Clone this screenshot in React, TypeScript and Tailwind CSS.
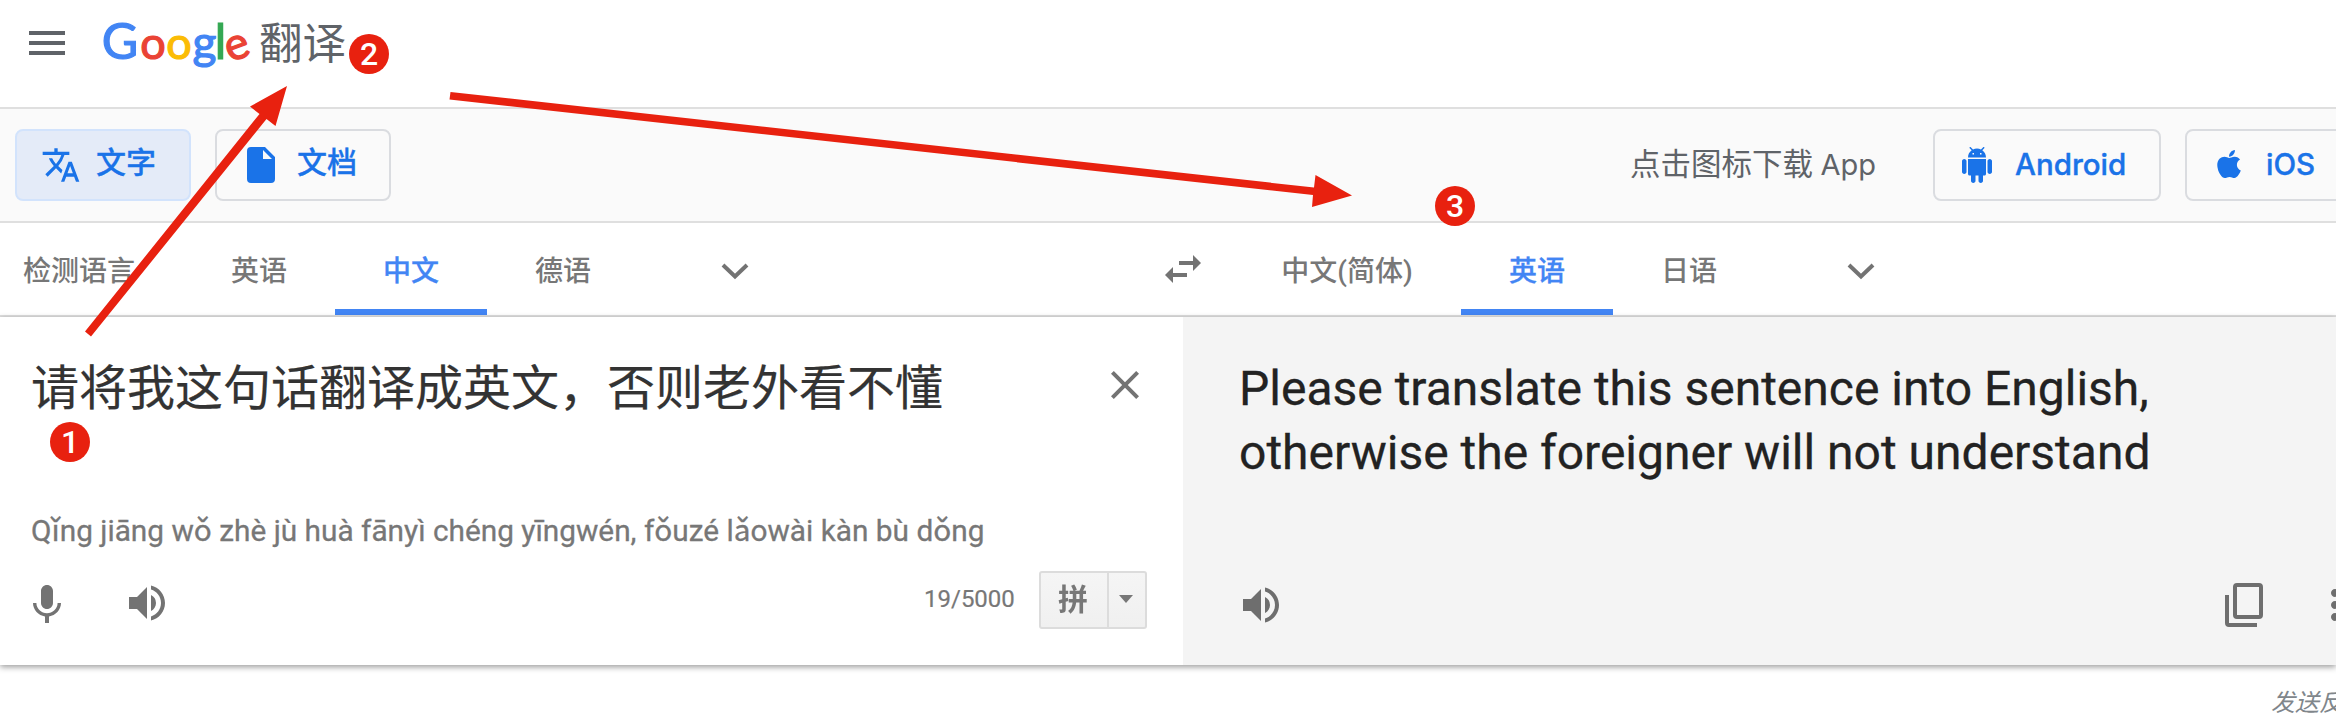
import React from "react";
import { MdMenu, MdTranslate, MdMic, MdVolumeUp, MdClose, MdMoreVert } from "react-icons/md";
import { FaApple } from "react-icons/fa";

const sans = "font-[Roboto,'Noto_Sans_CJK_SC',sans-serif]";

function Chevron() {
  return (
    <svg viewBox="0 0 28 18" className="mt-[3px] h-[18px] w-7 shrink-0" fill="none" stroke="#737373" strokeWidth="4">
      <path d="M2 3 14 14.5 26 3" />
    </svg>
  );
}

function AndroidIcon({ className }: { className: string }) {
  return (
    <svg viewBox="0 0 24 24" className={className} fill="currentColor">
      <path d="M6 18c0 .55.45 1 1 1h1v3.5c0 .83.67 1.5 1.5 1.5s1.5-.67 1.5-1.5V19h2v3.5c0 .83.67 1.5 1.5 1.5s1.5-.67 1.5-1.5V19h1c.55 0 1-.45 1-1V8H6v10zM3.5 8C2.67 8 2 8.67 2 9.5v7c0 .83.67 1.5 1.5 1.5S5 17.33 5 16.5v-7C5 8.67 4.33 8 3.5 8zm17 0c-.83 0-1.5.67-1.5 1.5v7c0 .83.67 1.5 1.5 1.5s1.5-.67 1.5-1.5v-7c0-.83-.67-1.5-1.5-1.5zm-4.97-5.84l1.3-1.3c.2-.2.2-.51 0-.71-.2-.2-.51-.2-.71 0l-1.48 1.48C13.85 1.23 12.95 1 12 1c-.96 0-1.86.23-2.66.63L7.85.15c-.2-.2-.51-.2-.71 0-.2.2-.2.51 0 .71l1.31 1.31C6.97 3.26 6 5.01 6 7h12c0-1.99-.97-3.75-2.47-4.84zM10 5H9V4h1v1zm5 0h-1V4h1v1z" />
    </svg>
  );
}

function Tab({ label, width, active }: { label: string; width: string; active?: boolean }) {
  return (
    <div
      className={`flex h-full shrink-0 items-center justify-center border-b-6 pt-[12px] text-[28px] font-medium whitespace-nowrap ${width} ${
        active ? "border-[#4285f4] text-[#4285f4] [-webkit-text-stroke:0.3px]" : "border-transparent text-[#777]"
      }`}
    >
      {label}
    </div>
  );
}

function Badge({ n, pos }: { n: number; pos: string }) {
  return (
    <div
      className={`absolute flex size-10 items-center justify-center rounded-full bg-[#e8210f] font-[Roboto,sans-serif] text-[32px] leading-none font-medium text-white ${pos}`}
    >
      {n}
    </div>
  );
}

function Wordmark() {
  return (
    <svg
      viewBox="0 0 154 84"
      className="mt-[3px] ml-[28px] h-[84px] w-[154px] shrink-0 font-[Lato,sans-serif]"
      textAnchor="middle"
      strokeWidth="1.2"
    >
      <text x="21" y="56" fontSize="50" fill="#4285f4" stroke="#4285f4">G</text>
      <text x="54" y="56" fontSize="45" fill="#ea4335" stroke="#ea4335">o</text>
      <text x="80" y="56" fontSize="45" fill="#fbbc05" stroke="#fbbc05">o</text>
      <text x="105.5" y="56" fontSize="46" fill="#4285f4" stroke="#4285f4">g</text>
      <text x="121.5" y="56" fontSize="48.5" fill="#34a853" stroke="#34a853">l</text>
      <text x="138.5" y="56" fontSize="45" fill="#ea4335" stroke="#ea4335" transform="rotate(-20 138.5 45)">e</text>
    </svg>
  );
}

function Header() {
  return (
    <header className="flex h-[109px] items-start border-b-2 border-[#dfdfdf] pl-[23px]">
      <MdMenu className="mt-[19px] size-12 shrink-0 text-[#5f6368]" />
      <Wordmark />
      <div className="mt-[7px] ml-[6px] font-['Noto_Sans_CJK_SC',sans-serif] text-[43.5px] leading-[68px] text-[#5f6368]">翻译</div>
    </header>
  );
}

function Toolbar() {
  const button = "flex h-[72px] shrink-0 items-center rounded-[8px] border-2 text-[30px] font-medium text-[#1a73e8]";
  const store = "-mt-[1px] font-[Inter,sans-serif] text-[29.5px] font-medium [-webkit-text-stroke:0.4px]";
  return (
    <div className="flex h-[114px] items-center border-b-2 border-[#dfdfdf] bg-[#fafafa] pl-[15px]">
      <div className={`${button} w-44 border-[#d2e3fc] bg-[#e4ebf8] pl-[24px]`}>
        <MdTranslate className="mr-[15px] size-10 shrink-0" />
        <span className="-mt-[6px] [-webkit-text-stroke:0.3px]">文字</span>
      </div>
      <div className={`${button} ml-6 w-44 border-[#dadce0] pl-[23px]`}>
        <svg viewBox="0 0 42 42" className="mr-[15px] size-[42px] shrink-0" fill="currentColor">
          <path fillRule="evenodd" d="M11 3H25L35 13V35Q35 39 31 39H11Q7 39 7 35V7Q7 3 11 3ZM23 6V15H32Z" />
        </svg>
        <span className="-mt-[6px] [-webkit-text-stroke:0.3px]">文档</span>
      </div>
      <div className="ml-[1239px] w-[303px] shrink-0 text-[30.5px] whitespace-nowrap text-[#5f6368]">
        点击图标下载 <span className="font-[Inter,sans-serif] text-[29px]">App</span>
      </div>
      <div className={`${button} w-[228px] border-[#dadce0] pl-[24px]`}>
        <AndroidIcon className="mr-[20px] size-9 shrink-0" />
        <span className={store}>Android</span>
      </div>
      <div className={`${button} ml-6 w-44 border-[#dadce0] pl-[26px]`}>
        <FaApple className="-mt-[3px] mr-[21px] size-8 shrink-0" />
        <span className={store}>iOS</span>
      </div>
    </div>
  );
}

function LanguageBar() {
  return (
    <div className="flex h-[94px] items-center border-b-2 border-[#dfdfdf]">
      <Tab label="检测语言" width="w-[158px]" />
      <div className="w-[25px] shrink-0" />
      <Tab label="英语" width="w-[152px]" />
      <Tab label="中文" width="w-[152px]" active />
      <Tab label="德语" width="w-[152px]" />
      <div className="ml-[82px]"><Chevron /></div>
      <svg viewBox="0 0 36 28" className="ml-[416px] h-7 w-9 shrink-0" fill="#737373">
        <path d="M14 6H28V0L36 8 28 16V10H14ZM22 18H8V12L0 20 8 28V22H22Z" />
      </svg>
      <div className="w-[56px] shrink-0" />
      <Tab label="中文(简体)" width="w-[180px]" />
      <div className="w-[24px] shrink-0" />
      <Tab label="英语" width="w-[152px]" active />
      <Tab label="日语" width="w-[152px]" />
      <div className="ml-[82px]"><Chevron /></div>
    </div>
  );
}

function SourcePanel() {
  return (
    <section className="flex h-full w-[1183px] shrink-0 flex-col bg-white">
      <div className="flex h-[170px] items-start pt-[36px] pl-[31px]">
        <p className="w-[1070px] text-[48px] leading-[72px] text-[#333] [-webkit-text-stroke:0.2px]">
          请将我这句话翻译成英文，否则老外看不懂
        </p>
        <MdClose className="mt-[8px] size-12 shrink-0 text-[#737373]" />
      </div>
      <p className="h-[84px] pl-[31px] text-[29.8px] leading-[88px] text-[#777] [-webkit-text-stroke:0.3px]">
        Qǐng jiāng wǒ zhè jù huà fānyì chéng yīngwén, fǒuzé lǎowài kàn bù dǒng
      </p>
      <div className="flex h-[58px] items-center pl-[23px]">
        <MdMic className="mt-[10px] size-12 text-[#737373]" />
        <MdVolumeUp className="mt-[6px] ml-[52px] size-12 text-[#737373]" />
        <span className="ml-[753px] w-[115px] pb-[3px] text-[24px] text-[#777] [-webkit-text-stroke:0.2px]">19/5000</span>
        <div className="flex h-[58px] w-[108px] rounded-[3px] border-2 border-[#dcdcdc] bg-linear-to-b from-[#f5f5f5] to-[#f0f0f0]">
          <div className="flex w-[66px] items-center justify-center pr-[2px] pb-[2px] text-[30px] font-bold text-[#777] blur-[0.7px]">拼</div>
          <div className="flex flex-1 items-center justify-center border-l-2 border-[#dcdcdc] pr-[2px] pb-[2px]">
            <svg viewBox="0 0 14 8" className="h-2 w-[14px]" fill="#777"><path d="M0 0H14L7 8Z" /></svg>
          </div>
        </div>
      </div>
    </section>
  );
}

function ResultPanel() {
  return (
    <section className="flex h-full flex-1 flex-col overflow-hidden bg-[#f4f4f4]">
      <p className="h-[260px] pt-[40px] pl-[56px] text-[48px] leading-[64px] whitespace-nowrap text-[#222] [-webkit-text-stroke:0.3px]">
        Please translate this sentence into English,
        <br />
        otherwise the foreigner will not understand
      </p>
      <div className="flex h-[56px] items-center pl-[54px] text-[#6e6e6e]">
        <MdVolumeUp className="size-12 shrink-0" />
        <svg viewBox="0 0 38 44" className="ml-[940px] h-11 w-[38px] shrink-0" fill="none" stroke="currentColor" strokeWidth="4">
          <rect x="10" y="2" width="26" height="32" rx="2" />
          <path d="M2 12V40Q2 42 4 42H32" />
        </svg>
        <MdMoreVert className="ml-[48px] size-12 shrink-0" />
      </div>
    </section>
  );
}

function Annotations() {
  return (
    <>
      <svg viewBox="0 0 2336 722" className="pointer-events-none absolute inset-0 h-[722px] w-[2336px]" fill="#e8210f">
        <path d="M85 331.5 91 336.5 266.5 119 275.5 126 287 86 250 106.5 259.5 114Z" />
        <path d="M450.5 92 449.5 99.5 1313 195 1312 207 1352 195.5 1315.5 175 1314 187.5Z" />
      </svg>
      <Badge n={2} pos="left-[349px] top-[34px]" />
      <Badge n={3} pos="left-[1435px] top-[186px]" />
      <Badge n={1} pos="left-[50px] top-[422px]" />
    </>
  );
}

export default function App() {
  return (
    <div className={`relative h-[722px] w-[2336px] overflow-hidden bg-white ${sans}`}>
      <Header />
      <Toolbar />
      <LanguageBar />
      <main className="relative flex h-[348px] shadow-[0_2px_6px_rgba(0,0,0,0.4)]">
        <SourcePanel />
        <ResultPanel />
      </main>
      <footer className="flex h-[57px] items-center pt-[18px] pl-[2271px] text-[24px] whitespace-nowrap text-[#80868b] italic">
        发送反馈
      </footer>
      <Annotations />
    </div>
  );
}
